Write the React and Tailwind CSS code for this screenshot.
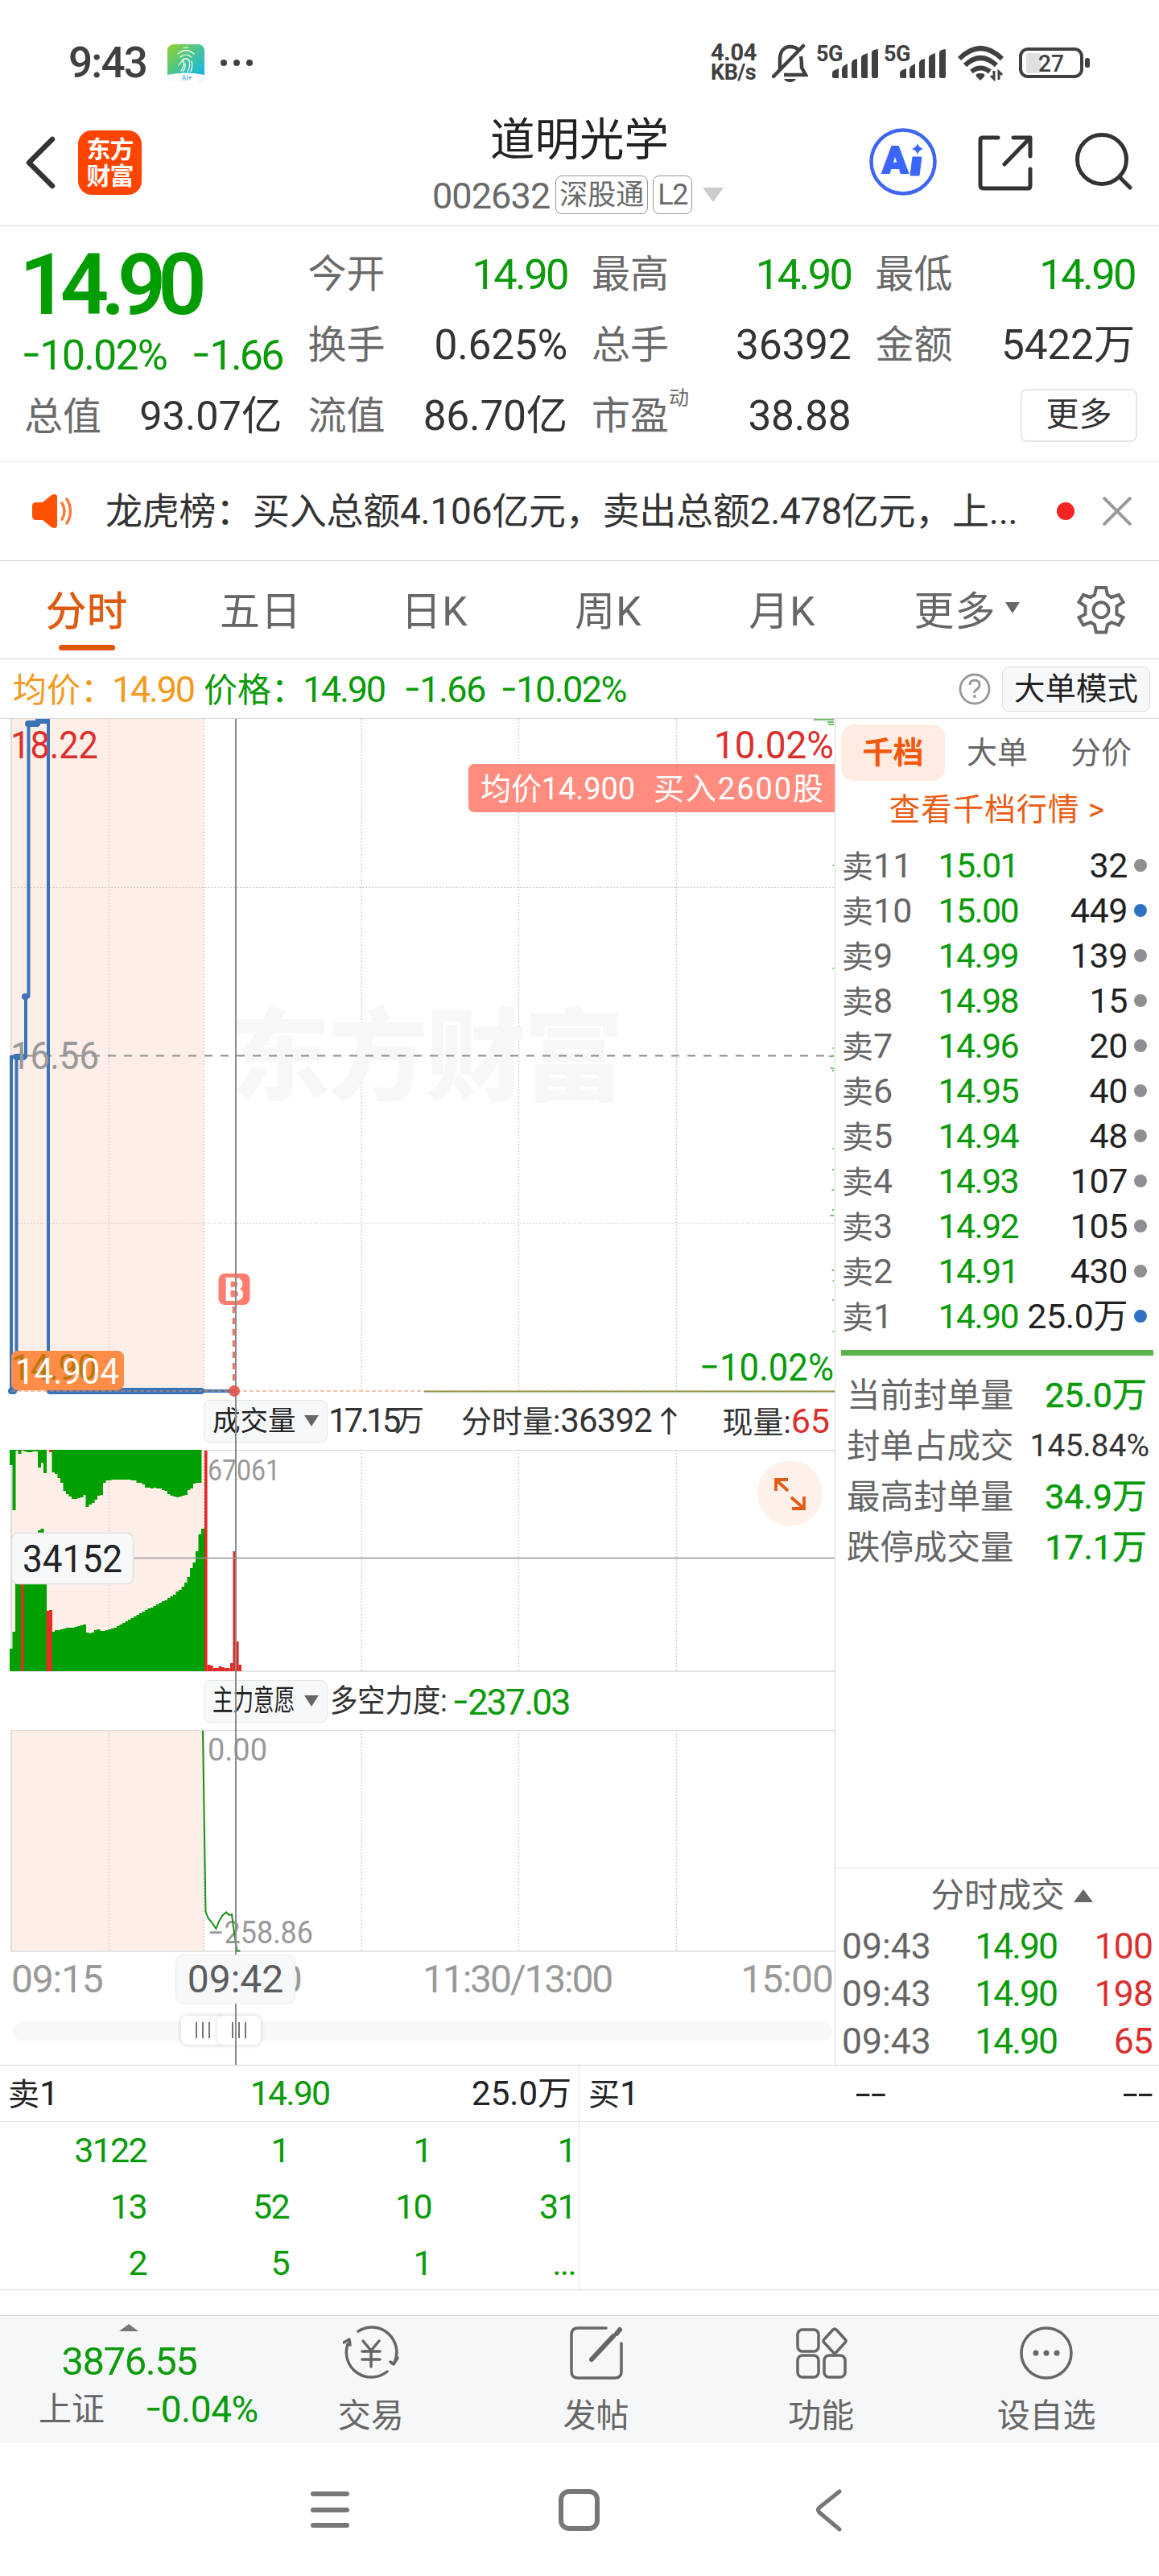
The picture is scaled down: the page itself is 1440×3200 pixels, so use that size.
import { Fragment } from 'react'

const GREEN = '#0a9a0a'
const RED = '#dc2f2d'
const BLUE = '#3a74b8'

const quotes = [
  [{ label: '今开', value: '14.90', green: true }, { label: '换手', value: '0.625%' }, { label: '流值', value: '86.70亿' }],
  [{ label: '最高', value: '14.90', green: true }, { label: '总手', value: '36392' }, { label: '市盈', sup: '动', value: '38.88' }],
  [{ label: '最低', value: '14.90', green: true }, { label: '金额', value: '5422万' }],
]

const tabs = ['分时', '五日', '日K', '周K', '月K']

const asks = [
  ['11', '15.01', '32'],
  ['10', '15.00', '449', true],
  ['9', '14.99', '139'],
  ['8', '14.98', '15'],
  ['7', '14.96', '20'],
  ['6', '14.95', '40'],
  ['5', '14.94', '48'],
  ['4', '14.93', '107'],
  ['3', '14.92', '105'],
  ['2', '14.91', '430'],
  ['1', '14.90', '25.0万', true],
]

const sealStats = [
  ['当前封单量', '25.0万'],
  ['封单占成交', '145.84%'],
  ['最高封单量', '34.9万'],
  ['跌停成交量', '17.1万'],
]

const trades = [
  ['09:43', '14.90', '100'],
  ['09:43', '14.90', '198'],
  ['09:43', '14.90', '65'],
]

const queue = [
  ['3122', '1', '1', '1'],
  ['13', '52', '10', '31'],
  ['2', '5', '1', '...'],
]

// call auction volume, one value per bar (top edge for the lower set, bottom edge for the upper set)
const lowerBars = [
  2048, 2027, 1960, 1960, 1955, 1950, 1945, 1940, 1935, 1930, 1901, 1899, 1950, 2001, 2000,
  2027, 2025, 2025, 2024, 2023, 2022, 2022, 2022, 2021, 2020, 2019, 2018, 2028, 2029, 2028, 2025, 2024, 2026, 2026,
  2025, 2024, 2023, 2022, 2020, 2018, 2016, 2014, 2012, 2010, 2008, 2006, 2004, 2002, 2000, 1998, 1997, 1995, 1993, 1991,
  1989, 1988, 1985, 1983, 1981, 1977, 1975, 1971, 1966, 1959, 1948, 1941, 1927, 1906, 1899,
]
const upperBars = [
  1820, 1876, 1802, 1806, 1802, 1803, 1804, 1804, 1803, 1803, 1823, 1817, 1830, 1801, 1804,
  1829, 1831, 1836, 1842, 1852, 1856, 1859, 1862, 1862, 1861, 1860, 1857, 1872, 1869, 1867, 1863, 1858, 1857, 1842,
  1839, 1839, 1838, 1838, 1838, 1838, 1838, 1838, 1838, 1839, 1839, 1842, 1842, 1844, 1848, 1848, 1849, 1848, 1849, 1849,
  1851, 1852, 1856, 1858, 1859, 1860, 1859, 1858, 1857, 1851, 1849, 1843, 1842, 1842,
]
const redLower = [4, 13, 14]
const redUpper = [4, 14]
const BAR = 3.5

const tradeBars = [
  [254, 1802, 3.6], [257.5, 2068, 3.6], [261, 2069, 3.6], [264.5, 2072, 3.6], [268, 2072, 3.6], [271.5, 2070, 3.6],
  [275, 2071, 3.6], [278.5, 2072, 3.6], [282, 2072, 3.6], [286, 2066, 3.6], [289.5, 1927, 3.6], [293, 2039, 3.6], [296.4, 2068, 3.6],
]

const profile = [
  [893, 25], [896, 8], [899, 7], [949, 3], [1004, 2], [1074, 1.5], [1202, 1.5], [1301, 1.5], [1311, 6], [1326, 4], [1329, 2],
  [1426, 1.5], [1452, 2], [1477, 2.5], [1502, 2], [1509, 4.5], [1577, 2.5], [1590, 1.5], [1614, 1.5], [1653, 1.5],
]

const Line = ({ className = 'bg-[#d6d6d6]' }) => <div className={`h-px w-full shrink-0 ${className}`} />

// short minus sign
const Minus = () => <span className="inline-block w-[0.43em] origin-left scale-x-[0.8]">−</span>

const Signal = () => (
  <div className="relative w-[76px] h-[48px]">
    <span className="absolute left-0 top-[1px] text-[27px] leading-[24px] font-bold tracking-[-0.02em] text-[#404040]">5G</span>
    <svg className="absolute left-[20px] top-[7px]" width="57" height="37" viewBox="0 0 57 37" fill="#404040">
      <path d="M0 30q0-3 3-4l5-2v12H2q-2 0-2-2zM12 25q0-2 2-4l5-3v18h-5q-2 0-2-2zM24 17q0-2 3-4l4-1v24h-5q-2 0-2-2zM36 11q0-3 3-4l5-2v31h-6q-2 0-2-2zM49 5q0-3 3-4l4-1q1 0 1 2v32q0 2-2 2h-4q-2 0-2-2z" />
    </svg>
  </div>
)

const StatusBar = () => (
  <header className="flex items-center h-[146px] shrink-0 pl-[85px] pt-[10px] pr-[85px] text-[#404040]">
    <span className="text-[53px] leading-none font-medium tracking-[-0.035em]">9:43</span>
    <svg className="ml-[26px]" width="46" height="46" viewBox="0 0 46 46">
      <defs>
        <linearGradient id="finger" x1="0" y1="0" x2="1" y2="1">
          <stop offset="0" stopColor="#93d422" />
          <stop offset=".5" stopColor="#45c39a" />
          <stop offset="1" stopColor="#0ab2ff" />
        </linearGradient>
        <clipPath id="fingerClip"><rect width="46" height="46" rx="8" /></clipPath>
      </defs>
      <g clipPath="url(#fingerClip)">
        <rect width="46" height="46" fill="url(#finger)" />
        <path d="M0 38q23-5 46 0v8H0z" fill="#fff" />
        <g fill="none" stroke="#fff" strokeWidth="1.2" strokeLinecap="round">
          <path d="M20 4h6M13 12q10-9 20 0M16 16q7-6 14 0M18 20q5-4 9 0 2 7-2 14M14 26q3-5 6-5 2 4-3 12M22 24q1 5-3 10M30 21q2 6-1 13" />
        </g>
        <text x="24" y="44.500" fontSize="8.500" textAnchor="middle" fill="#2aaed6">AI+</text>
      </g>
    </svg>
    <div className="flex gap-2 ml-[20px]">
      <i className="size-[8px] rounded-full bg-[#404040]" />
      <i className="size-[8px] rounded-full bg-[#404040]" />
      <i className="size-[8px] rounded-full bg-[#404040]" />
    </div>
    <div className="flex items-center ml-auto">
      <div className="flex flex-col w-[62px] text-[29px] leading-[25px] font-bold tracking-[-0.01em]">
        <span>4.04</span>
        <span className="text-[27px] tracking-[-0.02em]">KB/s</span>
      </div>
      <svg className="ml-[14px]" width="45" height="48" viewBox="0 0 45 48">
        <path d="M10 33V20C10 10 15 4 23 4q6 0 10 4M36 16q1 4 1 14l5 9H15" fill="none" stroke="#404040" strokeWidth="4.5" />
        <path d="M2 41L39 3" stroke="#404040" strokeWidth="4.5" strokeLinecap="round" />
        <path d="M15 44h15q-2 4-7.500 4T15 44z" fill="#404040" />
      </svg>
      <div className="flex ml-[10px] gap-[8px]">
        <Signal />
        <Signal />
      </div>
      <svg className="ml-[15px]" width="60" height="46" viewBox="0 0 60 46" fill="none" stroke="#404040" strokeWidth="6">
        <path d="M3 18Q29-8 56 18M10 26Q29 8 49 26M18 34Q29 25 41 34" />
        <path d="M29 36q7 0 5 4l-5 5-5-5q-2-4 5-4z" fill="#404040" stroke="none" />
        <path d="M46 33v10l-4-4M52 44V34l4 4" strokeWidth="3" />
      </svg>
      <svg className="ml-[17px]" width="89" height="38" viewBox="0 0 89 38">
        <rect x="2" y="2" width="76" height="34" rx="9" fill="none" stroke="#404040" strokeWidth="4" />
        <rect x="9" y="7" width="18" height="25" rx="3" fill="#e0e0e0" />
        <rect x="82" y="13" width="6" height="12" rx="2.500" fill="#404040" />
        <text x="40" y="30" fontSize="30" fontWeight="500" textAnchor="middle" textLength="32" lengthAdjust="spacingAndGlyphs" fill="#404040">27</text>
      </svg>
    </div>
  </header>
)

const TitleBar = () => (
  <div className="grid grid-cols-[440px_1fr_440px] h-[134px] shrink-0">
    <div className="flex items-start pl-[31px] pt-[16px]">
      <svg className="mt-[7px]" width="38" height="66" viewBox="0 0 38 66" fill="none" stroke="#333" strokeWidth="6.500" strokeLinecap="round" strokeLinejoin="round">
        <path d="M34 4L5 33l29 29" />
      </svg>
      <div className="flex flex-col items-center justify-center ml-[28px] w-[79px] h-[80px] rounded-[17px] bg-[#ff4400] text-white text-[30px] leading-[33px] font-bold tracking-[-0.03em]">
        <span>东方</span>
        <span>财富</span>
      </div>
    </div>
    <div className="flex flex-col items-center">
      <h1 className="pt-[1px] text-[55.5px] leading-[56px] text-[#222]">道明光学</h1>
      <div className="flex items-center h-[48px] mt-[15px] -ml-[4px] text-[#6a6a6a]">
        <span className="text-[45px] leading-none tracking-[-0.02em] pt-[2px]">002632</span>
        <span className="flex items-center h-[48px] ml-[7px] px-[4px] rounded-lg border-[1.5px] border-[#999] text-[35px] leading-none">深股通</span>
        <span className="flex items-center h-[48px] ml-[6px] px-[5px] rounded-lg border-[1.5px] border-[#999] text-[36px] leading-none tracking-[-0.04em]">L2</span>
        <svg className="ml-[13px]" width="26" height="18" viewBox="0 0 26 18"><path d="M0 0h26L13 18z" fill="#ccc" /></svg>
      </div>
    </div>
    <div className="flex pl-[80px] pt-[13px]">
      <svg width="84" height="84" viewBox="0 0 84 84">
        <circle cx="42" cy="42" r="39.500" fill="none" stroke="#3f66ee" strokeWidth="4.500" />
        <text x="16" y="56" fontSize="46" fontWeight="900" fill="#3a66ff" stroke="#3a66ff" strokeWidth="2" textLength="32" lengthAdjust="spacingAndGlyphs">A</text>
        <path d="M54 36h11l-3 23H51z" fill="#3a66ff" stroke="#3a66ff" strokeLinejoin="round" />
        <path d="M60 19q1 5 7 7-6 2-7 7-1-5-7-7 6-2 7-7z" fill="#3a66ff" />
      </svg>
      <svg className="ml-[51px] mt-[8px]" width="68" height="70" viewBox="0 0 68 70" fill="none" stroke="#333" strokeWidth="5" strokeLinecap="round" strokeLinejoin="round">
        <path d="M25 4H6Q3 4 3 7v56q0 4 4 4h55q3 0 3-3V43M44 4h21v23M65 4L33 37" />
      </svg>
      <svg className="ml-[53px] mt-[6px]" width="72" height="72" viewBox="0 0 72 72" fill="none" stroke="#333" strokeWidth="5" strokeLinecap="round">
        <circle cx="33" cy="33" r="30.500" />
        <path d="M55 55l13 13" />
      </svg>
    </div>
  </div>
)

const QuotePanel = () => (
  <section className="flex h-[292px] shrink-0 pl-[30px] text-[#333]">
    <div className="w-[353px] pr-[32px]">
      <div className="h-[103px] pt-[20px]">
        <span className="block text-[106px] leading-[106px] font-semibold tracking-[-0.093em] -ml-[6px] text-[#009c00]">14.90</span>
      </div>
      <div className="flex items-center justify-between h-[88px] pt-[27px] text-[52px] leading-none whitespace-nowrap text-[#0a9a0a]">
        <span className="tracking-[-0.035em] -ml-[3px]"><Minus />10.02%</span>
        <span className="tracking-[-0.055em]"><Minus />1.66</span>
      </div>
      <div className="flex items-center justify-between h-[88px] pt-[3px] text-[48px] leading-none">
        <span className="text-[#6a6a6a]">总值</span>
        <span className="text-[50.5px]">93.07亿</span>
      </div>
    </div>
    {quotes.map((col, i) => (
      <div key={i} className="w-[353px] pr-[30px] pt-[16px]">
        {col.map((q) => (
          <div key={q.label} className="flex items-center justify-between h-[88px] text-[48px] leading-none">
            <span className="text-[#6a6a6a]">
              {q.label}
              {q.sup && <sup className="relative -top-[30px] align-baseline text-[25px] leading-none">{q.sup}</sup>}
            </span>
            <span className={q.green ? 'text-[52.5px] tracking-[-0.05em] text-[#0a9a0a]' : 'text-[51.5px] tracking-[-0.005em]'}>{q.value}</span>
          </div>
        ))}
        {i === 2 && (
          <div className="flex items-center justify-end h-[88px] -mr-[3px] pb-[3px]">
            <button className="w-[145px] h-[66px] rounded-lg border-2 border-[#e6e6e6] text-[41px] leading-none">更多</button>
          </div>
        )}
      </div>
    ))}
  </section>
)

const Notice = () => (
  <div className="flex items-center h-[122px] shrink-0 pl-[39px] pr-[34px] text-[#333]">
    <svg width="52" height="44" viewBox="0 0 52 44">
      <path d="M6 11h8L25 2q7-3 7 3v34q0 6-7 3l-11-9H6q-5 0-5-5V16q0-5 5-5z" fill="#ff5200" />
      <path d="M38 12q6 10 0 20M44 7q9 15 0 30" fill="none" stroke="#ff7a3a" strokeWidth="3.500" strokeLinecap="round" />
    </svg>
    <span className="ml-[40px] w-[1151px] text-[46px] leading-none tracking-[-0.25px] whitespace-nowrap">龙虎榜：买入总额4.106亿元，卖出总额2.478亿元，上...</span>
    <i className="ml-[31px] size-[22px] rounded-full bg-[#f42424] shrink-0" />
    <svg className="ml-auto" width="36" height="36" viewBox="0 0 36 36" stroke="#999" strokeWidth="4"><path d="M1 1l34 34M35 1L1 35" /></svg>
  </div>
)

const PeriodTabs = () => (
  <nav className="flex h-[121px] shrink-0 text-[50px] text-[#666] tracking-[0.02em]">
    {tabs.map((t, i) => (
      <div key={t} className="flex flex-col items-center w-[216px] pt-[36px]">
        <span className={i === 0 ? 'leading-[54px] text-[#dd5a12] [-webkit-text-stroke:0.8px_#dd5a12]' : 'leading-[54px]'}>{t}</span>
        {i === 0 && <i className="w-[70px] h-[7px] mt-[14px] rounded-full bg-[#e0560c]" />}
      </div>
    ))}
    <div className="flex items-start justify-center w-[216px] pl-[26px] pt-[36px]">
      <span className="leading-[54px]">更多</span>
      <svg className="mt-[15px] ml-[11px]" width="18" height="14" viewBox="0 0 18 14"><path d="M0 0h18L9 14z" fill="#666" /></svg>
    </div>
    <div className="flex items-start justify-center w-[144px] pt-[31px]">
      <svg width="60" height="60" viewBox="0 0 60 60" fill="none" stroke="#666" strokeWidth="4">
        <path d="M24 2h12l2 9 5 3 9-3 5.500 9-8 5v10l8 4-5.500 9.500-9-3.500-5 3-2 9.500H24L22 48l-5-3-9 3.500L2.500 39l8-4V25l-8-5L8 11l9 3 5-3z" />
        <circle cx="30" cy="29.700" r="9.500" />
      </svg>
    </div>
  </nav>
)

const PriceInfo = () => (
  <div className="flex items-center h-[73px] shrink-0 pl-[16px] pr-[11px] pt-px text-[42px] leading-none whitespace-nowrap text-[#0a9a0a]">
    <span className="w-[237px] text-[#f39a1e]">均价：<span className="-ml-[3px] text-[45px] tracking-[-0.05em]">14.90</span></span>
    <span className="w-[249px]">价格：<span className="-ml-[3px] text-[45px] tracking-[-0.05em]">14.90</span></span>
    <span className="w-[120px] text-[45px] tracking-[-0.035em]"><Minus />1.66</span>
    <span className="text-[45px] tracking-[-0.035em]"><Minus />10.02%</span>
    <svg className="ml-auto" width="40" height="40" viewBox="0 0 40 40" fill="none" stroke="#999" strokeWidth="2.800">
      <circle cx="20" cy="20" r="18" />
      <path d="M14 15q0-6 6-6t6 6q0 3-3.500 5.500T20 25" />
      <circle cx="20" cy="29" r="1.200" fill="#999" strokeWidth="1.500" />
    </svg>
    <button className="ml-[14px] w-[184px] h-[56px] rounded-lg border-[1.5px] border-[#d9dbdf] bg-[#f7f8fa] text-[38.5px] leading-none text-[#222]">大单模式</button>
  </div>
)

const GridLines = ({ top, bottom }) => (
  <g stroke="#d4d4d4" strokeWidth="1.500" strokeDasharray="2 2">
    {[135.5, 253.5, 449, 644.5, 840.5].map((x) => <path key={x} d={`M${x} ${top}V${bottom}`} />)}
  </g>
)

const PriceChart = () => (
  <svg className="block" width="1037" height="839" viewBox="0 893 1037 839">
    <rect x="14" y="893" width="239" height="835" fill="#fdeee7" />
    <GridLines top={893} bottom={1728} />
    <path d="M14 893V1728" stroke="#ddd" strokeWidth="2" />
    <path d="M14 1102.500H1036M14 1519.500H1036" stroke="#d0d0d0" strokeDasharray="2 2" />
    <text x="286" y="1357" fontSize="124" fontWeight="900" fill="#f7f7f7" textLength="489">东方财富</text>
    <path d="M14 1311.500H1036" stroke="#8c8c8c" strokeWidth="2" strokeDasharray="10 10" />
    <g fill="none" stroke={BLUE} strokeLinejoin="round">
      <path d="M14 1728V1311M20.500 1728V1313H32V1238H35.500V899H48V895H60V1728H292" strokeWidth="4" />
      <path d="M35 899H46M48 895H58M20 1313H29M31 1238h1M62 1728H250M14 1728h3" strokeWidth="8" strokeLinecap="round" />
    </g>
    <path d="M527 1728.500H1037" stroke="#6a9a3a" strokeWidth="2" />
    <path d="M14 1728H1037" stroke="#f08a5a" strokeWidth="1.200" strokeDasharray="5 3" />
    <path d="M291 1623V1722" stroke="#ee7767" strokeWidth="4.500" strokeDasharray="8 6" />
    <rect x="271.500" y="1582" width="39" height="39" rx="8" fill="#ff7d6f" />
    <text x="291" y="1616" fontSize="40" fontWeight="700" textAnchor="middle" fill="#fff">B</text>
    <g fill="#6dbd6d">
      {profile.map(([y, w]) => <rect key={y} x={1036 - w} y={y} width={w} height="2" />)}
    </g>
    <text x="13" y="942" fontSize="48" fill={RED} textLength="109" lengthAdjust="spacingAndGlyphs">18.22</text>
    <text x="13" y="1328" fontSize="48" fill="#999" textLength="110" lengthAdjust="spacingAndGlyphs">16.56</text>
    <text x="887" y="942" fontSize="48" fill={RED} textLength="149" lengthAdjust="spacingAndGlyphs">10.02%</text>
    <text x="869" y="1715" fontSize="48" fill={GREEN} textLength="167" lengthAdjust="spacingAndGlyphs">−10.02%</text>
    <path d="M590 949H1037v60H590q-8 0-8-8V957q0-8 8-8z" fill="#ff8c7f" />
    <path d="M644.500 949V1009M840.500 949V1009" stroke="#f08274" strokeDasharray="2 2" />
    <text x="597" y="993" fontSize="38" fill="#fff" textLength="192">均价14.900</text>
    <text x="812" y="993" fontSize="38" fill="#fff" textLength="211">买入2600股</text>
    <rect x="14" y="1678" width="140" height="49" rx="8" fill="#ff8d47" />
    <text x="14" y="1714" fontSize="45" fill="#b8780a" textLength="106" lengthAdjust="spacingAndGlyphs">14.90</text>
    <text x="19" y="1719" fontSize="44" fill="#fff" textLength="129" lengthAdjust="spacingAndGlyphs">14.904</text>
  </svg>
)

const VolumeChart = () => (
  <svg className="block" width="1037" height="276" viewBox="0 1801 1037 276">
    <rect x="14" y="1801" width="239" height="275" fill="#fdeee7" />
    <GridLines top={1801} bottom={2076} />
    <path d="M14 1801.500H1037M14 2076H1037" stroke="#dcdcdc" strokeWidth="1.500" />
    <path d="M14 1801V2076" stroke="#ddd" strokeWidth="2" />
    {lowerBars.map((y, i) => (
      <rect key={i} x={12 + i * BAR} y={y} width="4" height={2076 - y} fill={redLower.includes(i) ? '#ea2a25' : '#00a000'} />
    ))}
    {upperBars.map((y, i) => (
      <rect key={i} x={12 + i * BAR} y={1801} width="4" height={y - 1801} fill={redUpper.includes(i) ? '#ea2a25' : '#00a000'} />
    ))}
    <text x="258" y="1839" fontSize="37" fill="#999" textLength="90" lengthAdjust="spacingAndGlyphs">67061</text>
    {tradeBars.map(([x, y, w]) => <rect key={x} x={x} y={y} width={w} height={2076 - y} fill="#e32824" />)}
    <path d="M14 1935.500H1037" stroke="#969696" strokeWidth="1.500" />
    <rect x="14.500" y="1904.500" width="151" height="63" rx="8" fill="#f7f8fa" stroke="#dfe1e5" strokeWidth="1.500" />
    <text x="28" y="1953" fontSize="48" fill="#222" textLength="124" lengthAdjust="spacingAndGlyphs">34152</text>
    <circle cx="981.500" cy="1855" r="40.500" fill="#fff1e9" />
    <path d="M964 1852v-14h15M964 1838l15 14M999 1859v15h-15M999 1874l-16-14" fill="none" stroke="#e25c14" strokeWidth="3.800" />
  </svg>
)

const PowerChart = () => (
  <svg className="block" width="1037" height="276" viewBox="0 2149 1037 276">
    <rect x="14" y="2149" width="239" height="275" fill="#fdeee7" />
    <GridLines top={2149} bottom={2424} />
    <path d="M14 2149.500H1037M14 2424H1037" stroke="#dcdcdc" strokeWidth="1.500" />
    <path d="M14 2149V2424" stroke="#ddd" strokeWidth="2" />
    <text x="258" y="2187" fontSize="38" fill="#999" textLength="74" lengthAdjust="spacingAndGlyphs">0.00</text>
    <text x="258" y="2414" fontSize="38" fill="#999" textLength="131" lengthAdjust="spacingAndGlyphs">−258.86</text>
    <path d="M252 2150l3.500 224.500 3 8 4.500 5.500 5.500 8 3.500-9 4-7 5-4.500 3.500 3.500 3.500-1 3 23 3.500 22.500h4" fill="none" stroke="#1a8f1a" strokeWidth="2" />
  </svg>
)

const IndicatorSelect = ({ children }) => (
  <button className="flex items-center justify-between w-[154px] h-[53px] pl-[10px] pr-[10px] rounded-lg border-[1.5px] border-[#e3e5e8] bg-[#f7f8fa] text-[#222]">
    {children}
    <svg width="18" height="14" viewBox="0 0 18 14"><path d="M0 0h18L9 14z" fill="#666" /></svg>
  </button>
)

const Grip = ({ className = '' }) => (
  <div className={`flex items-center justify-center gap-[6px] w-[54px] h-[36px] rounded-lg bg-white shadow-[0_0_6px_rgba(0,0,0,0.18)] ${className}`}>
    <i className="w-[2px] h-[20px] bg-[#777]" />
    <i className="w-[2px] h-[20px] bg-[#777]" />
    <i className="w-[2px] h-[20px] bg-[#777]" />
  </div>
)

const ChartColumn = () => (
  <div className="relative w-[1037px]">
    <PriceChart />
    <div className="flex items-center h-[69px] pl-[253px] pb-[3px] text-[38px] leading-none text-[#333] whitespace-nowrap">
      <IndicatorSelect><span className="text-[34.5px] leading-none">成交量</span></IndicatorSelect>
      <span className="flex items-center ml-[1px] w-[165px]">
        <span className="w-[82px] text-[42px] tracking-[-0.09em]">17.15</span>
        <span className="text-[37px]">万</span>
      </span>
      <span>分时量:<span className="text-[42px] tracking-[-0.02em]">36392</span></span>
      <svg className="ml-[10px]" width="22" height="34" viewBox="0 0 22 34" fill="none" stroke="#333" strokeWidth="3"><path d="M11 34V2M2 11l9-9 9 9" /></svg>
      <span className="ml-auto pr-[6px]">现量:<span className="text-[43px] text-[#dc2f2d]">65</span></span>
    </div>
    <VolumeChart />
    <div className="flex items-center h-[72px] pl-[253px] text-[39px] leading-none text-[#333] whitespace-nowrap">
      <IndicatorSelect>
        <span className="w-[102px]"><span className="block w-[144px] origin-left scale-x-[0.71] text-[36px] leading-none">主力意愿</span></span>
      </IndicatorSelect>
      <span className="ml-[3px] w-[152px]"><span className="block origin-left scale-x-[0.88]">多空力度:</span></span>
      <span className="pt-[2px] text-[45px] tracking-[-0.045em] text-[#0a9a0a]"><Minus />237.03</span>
    </div>
    <PowerChart />
    <div className="flex items-center h-[68px] pl-[14px] pr-[2px] text-[48px] leading-none text-[#999]">
      <span className="w-[246px] tracking-[-0.025em]">09:15</span>
      <span className="w-[265px] tracking-[-0.02em]">09:30</span>
      <span className="tracking-[-0.045em]">11:30/13:00</span>
      <span className="ml-auto tracking-[-0.02em]">15:00</span>
    </div>
    <div className="flex items-center h-[72px] pl-[16px] pb-[12px]">
      <div className="w-[1018px] h-[24px] rounded-full bg-[#f7f8fa]" />
    </div>
    <div className="absolute left-[225px] top-[1611px] flex">
      <Grip />
      <Grip className="-ml-[9px]" />
    </div>
    {/* crosshair runs through all the sub charts */}
    <i className="absolute left-[292px] top-0 bottom-0 w-[1.5px] bg-[#8c8c8c]" />
    <i className="absolute left-[284px] top-[828px] size-[14px] rounded-full bg-[#e2564b]/90" />
    <div className="absolute left-[218px] top-[1535px] flex items-center justify-center w-[149px] h-[61px] rounded-lg border border-[#e8eaed] bg-[#f7f8fa] text-[48px] leading-none text-[#5c5c5c]">09:42</div>
  </div>
)

const OrderBook = () => (
  <aside className="flex flex-col flex-1 border-l border-[#d6d6d6]">
    <div className="flex items-center h-[84px] pl-[7px] text-[38px] leading-none text-[#666]">
      <span className="flex items-center justify-center w-[129px] h-[70px] rounded-2xl bg-[#feece3] font-bold text-[#f4580c]">千档</span>
      <span className="ml-[27px]">大单</span>
      <span className="ml-[53px]">分价</span>
    </div>
    <div className="h-[70px] pt-[8px] text-center text-[38.5px] leading-[42px] tracking-[0.025em] text-[#ec5b12]">查看千档行情 &gt;</div>
    <div className="text-[43px] leading-none">
      {asks.map(([n, price, vol, big]) => (
        <div key={n} className="grid grid-cols-[102px_117px_1fr_39px] items-center h-[56px] pl-[8px] whitespace-nowrap">
          <span className="text-[39px] text-[#666]">卖<span className="text-[43px]">{n}</span></span>
          <span className="text-right tracking-[-0.04em] text-[#0a9a0a]">{price}</span>
          <span className="flex justify-end -ml-4 text-[#222] tracking-[-0.01em]">{vol}</span>
          <i className={big ? 'ml-[8px] size-[16px] rounded-full bg-[#2f72c4]' : 'ml-[8px] size-[16px] rounded-full bg-[#8e8e93]'} />
        </div>
      ))}
    </div>
    <div className="h-[7px] mx-[7px] mt-[14px] bg-[#5ab348]" />
    <div className="pt-[18px]">
      {sealStats.map(([label, value]) => (
        <div key={label} className="flex items-center justify-between h-[63px] pl-[14px] pr-[15px] text-[41.5px] leading-none text-[#666]">
          <span>{label}</span>
          {value.endsWith('%')
            ? <span className="-mr-[3px] text-[39px] text-[#333]">{value}</span>
            : <span className="text-[43px] text-[#0a9a0a] [-webkit-text-stroke:0.5px_#0a9a0a]">{value}</span>}
        </div>
      ))}
    </div>
    <Line className="mt-auto bg-[#e4e4e4]" />
    <div className="flex items-center justify-center h-[67px] pl-[36px] text-[41.5px] leading-none text-[#666]">
      分时成交
      <svg className="ml-[11px]" width="24" height="16" viewBox="0 0 24 16"><path d="M0 16h24L12 0z" fill="#666" /></svg>
    </div>
    <div>
      {trades.map(([time, price, vol], i) => (
        <div key={i} className="grid grid-cols-[120px_155px_1fr] items-center h-[59px] pl-[8px] pr-[8px] pt-[1px] text-[44.5px] leading-none">
          <span className="text-[#666]">{time}</span>
          <span className="pr-[8px] text-right tracking-[-0.045em] text-[#0a9a0a]">{price}</span>
          <span className="text-right tracking-[-0.02em] text-[#dc2f2d]">{vol}</span>
        </div>
      ))}
    </div>
  </aside>
)

const QueueTable = () => (
  <section className="flex h-[278px] shrink-0 text-[43px] leading-none text-[#222]">
    <div className="w-[720px] border-r-[1.5px] border-[#e2e2e2]">
      <div className="grid grid-cols-3 items-center h-[69px] pl-[10px] pr-[9px]">
        <span className="text-[39px]">卖<span className="text-[43px]">1</span></span>
        <span className="text-center tracking-[-0.045em] text-[#0a9a0a]">14.90</span>
        <span className="text-right text-[42px]">25.0万</span>
      </div>
      <Line className="bg-[#e2e2e2]" />
      <div className="grid grid-cols-[182px_177px_177px_179px] text-[#0a9a0a]">
        {queue.map((row, r) => (
          <Fragment key={r}>
            {row.map((v, i) => (
              <span key={i} className="flex items-center justify-end h-[70px] tracking-[-0.04em]">{v}</span>
            ))}
          </Fragment>
        ))}
      </div>
    </div>
    <div className="flex-1">
      <div className="grid grid-cols-3 items-center h-[69px] pl-[11px] pr-[7px]">
        <span className="text-[39px]">买<span className="text-[43px]">1</span></span>
        <span className="text-center"><span className="inline-block scale-x-[1.6]">--</span></span>
        <span className="text-right"><span className="inline-block origin-right scale-x-[1.6]">--</span></span>
      </div>
      <Line className="bg-[#e2e2e2]" />
    </div>
  </section>
)

const actions = [
  {
    label: '交易',
    icon: (
      <>
        <path d="M19 8A31 31 0 0 1 64 47M68 41l-5 8-4-3M55 58A31 31 0 0 1 6 24M1 22l7-4 1 7" />
        <path d="M25 20l10 12 10-12M24 33h22M24 43h22M35 32v20" />
      </>
    ),
  },
  {
    label: '发帖',
    icon: (
      <>
        <path d="M47 4H12q-8 0-8 8v46q0 8 8 8h46q8 0 8-8V23" />
        <path d="M64 6l-4 5" strokeWidth="6" />
        <path d="M56 14L29 43" strokeWidth="6" />
      </>
    ),
  },
  {
    label: '功能',
    icon: (
      <>
        <rect x="6" y="6" width="26" height="27" rx="6" />
        <rect x="6" y="38" width="26" height="27" rx="6" />
        <rect x="39" y="38" width="26" height="27" rx="6" />
        <path d="M50 6q2-2 4 0l11 12q2 2 0 4L54 34q-2 2-4 0L39 22q-2-2 0-4z" />
      </>
    ),
  },
  {
    label: '设自选',
    icon: (
      <>
        <circle cx="35" cy="35" r="31" />
        <g fill="#666" stroke="none">
          <circle cx="22" cy="35" r="3.500" />
          <circle cx="35" cy="35" r="3.500" />
          <circle cx="48" cy="35" r="3.500" />
        </g>
      </>
    ),
  },
]

const ActionBar = () => (
  <footer className="flex h-[158px] shrink-0 bg-[#f6f7f9] text-[#666]">
    <div className="flex flex-col items-center w-[321px] pt-[10px]">
      <svg width="24" height="9" viewBox="0 0 24 9"><path d="M0 9h24L12 0z" fill="#777" /></svg>
      <span className="mt-[13px] text-[49px] leading-[50px] tracking-[-0.03em] text-[#0a9a0a]">3876.55</span>
      <div className="flex items-center justify-between self-stretch mt-[11px] pl-[48px] text-[41px] leading-none">
        <span>上证</span>
        <span className="text-[46px] tracking-[-0.01em] text-[#0a9a0a]"><Minus />0.04%</span>
      </div>
    </div>
    {actions.map((a) => (
      <div key={a.label} className="flex flex-col items-center w-[280px] pt-[11px]">
        <svg width="70" height="70" viewBox="0 0 70 70" fill="none" stroke="#666" strokeWidth="3.500" strokeLinecap="round" strokeLinejoin="round">{a.icon}</svg>
        <span className="mt-[23px] text-[41px] leading-none">{a.label}</span>
      </div>
    ))}
  </footer>
)

const SystemNav = () => (
  <div className="flex h-[165px] shrink-0 pl-[385px] pt-[56px]">
    <svg width="661" height="54" viewBox="0 0 661 54" fill="none" stroke="#777" strokeWidth="6" strokeLinecap="round" strokeLinejoin="round">
      <path d="M4 7h42M4 27h42M4 46h42" />
      <rect x="312" y="4" width="45" height="46" rx="10" />
      <path d="M658 4L633 24q-3 3 0 6l25 21" strokeWidth="5" />
    </svg>
  </div>
)

export default function App() {
  return (
    <div className="flex flex-col w-[1440px] h-[3200px] overflow-hidden bg-white font-[Roboto,'Noto_Sans_CJK_SC',sans-serif]">
      <StatusBar />
      <TitleBar />
      <Line />
      <QuotePanel />
      <Line className="bg-[#ebebeb]" />
      <Notice />
      <Line />
      <PeriodTabs />
      <Line />
      <PriceInfo />
      <Line />
      <main className="flex h-[1672px] shrink-0">
        <ChartColumn />
        <OrderBook />
      </main>
      <Line />
      <QueueTable />
      <Line />
      <div className="h-[31px] shrink-0" />
      <Line />
      <ActionBar />
      <SystemNav />
    </div>
  )
}
